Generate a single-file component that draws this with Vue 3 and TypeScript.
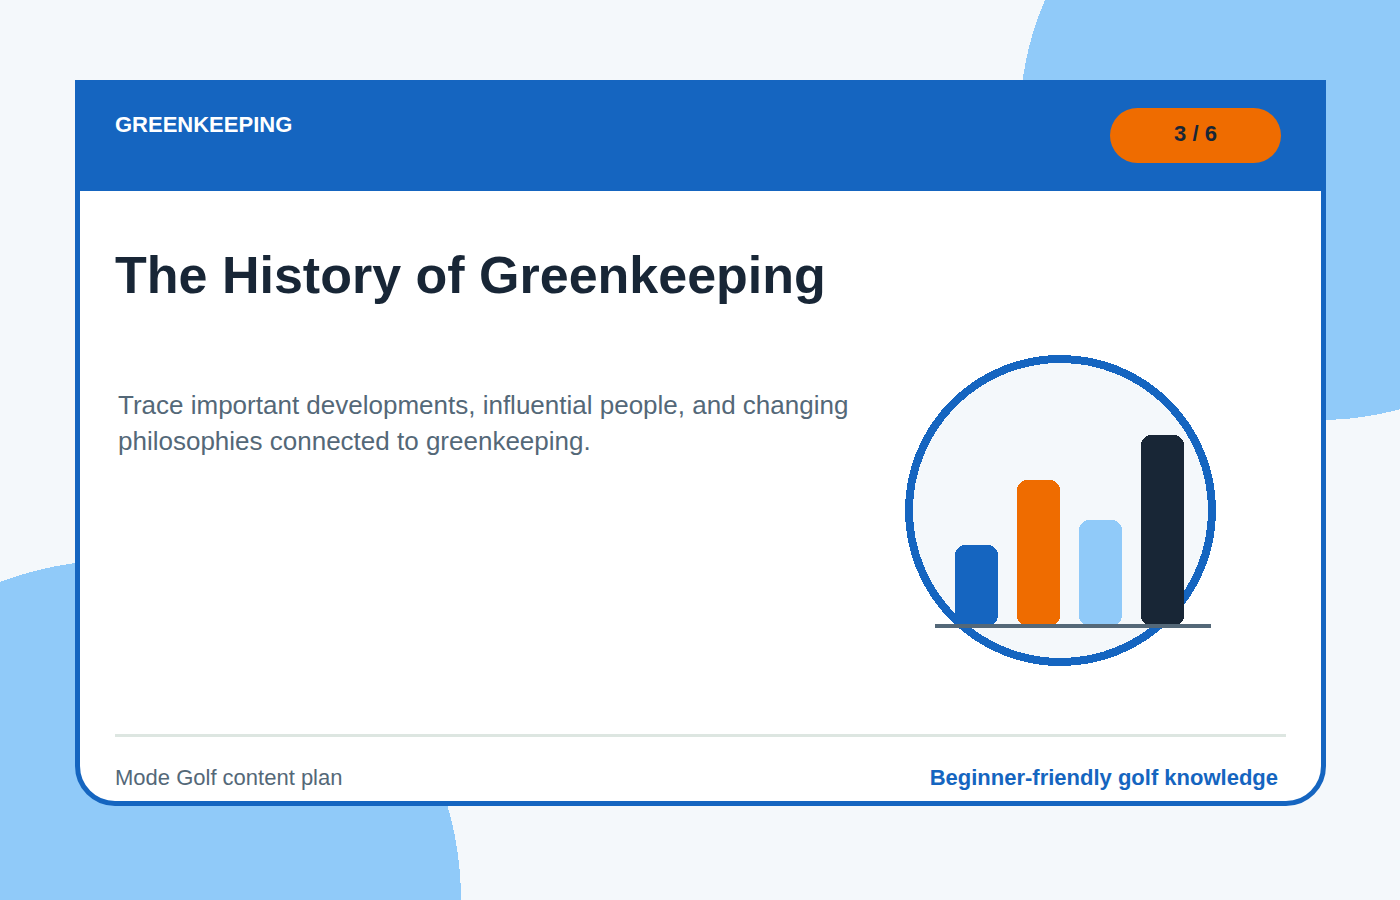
<script setup lang="ts">
interface Bar { x: number; top: number; color: string }
const bars: Bar[] = [
  { x: 55, top: 195, color: '#1565c0' },
  { x: 117, top: 130, color: '#ef6c00' },
  { x: 179, top: 170, color: '#90caf9' },
  { x: 241, top: 85, color: '#182636' },
]
</script>

<template>
  <div class="page">
    <svg class="blobs" width="1400" height="900" viewBox="0 0 1400 900" aria-hidden="true">
      <circle cx="1320" cy="120" r="300" fill="#90caf9" />
      <circle cx="120.5" cy="900.5" r="340.5" fill="#90caf9" />
    </svg>
    <section class="card">
      <header class="head">
        <span class="label">GREENKEEPING</span>
        <span class="pill">3 / 6</span>
      </header>
      <main class="body">
        <h1 class="title">The History of Greenkeeping</h1>
        <div class="row">
          <p class="text">Trace important developments, influential people, and changing philosophies connected to greenkeeping.</p>
          <svg class="chart" width="320" height="320" viewBox="0 0 320 320" aria-hidden="true">
            <circle cx="160.5" cy="160.5" r="151.5" fill="#f4f8fb" stroke="#1565c0" stroke-width="8" />
            <rect
              v-for="bar in bars"
              :key="bar.x"
              :x="bar.x"
              :y="bar.top"
              width="43"
              :height="276 - bar.top"
              rx="10"
              :fill="bar.color"
            />
            <rect x="35" y="274" width="276" height="4" fill="#546878" />
          </svg>
        </div>
      </main>
      <footer class="foot">
        <span class="foot-left">Mode Golf content plan</span>
        <span class="foot-right">Beginner-friendly golf knowledge</span>
      </footer>
    </section>
  </div>
</template>

<style>
html, body { margin: 0; padding: 0; }
</style>

<style scoped>
.page {
  position: relative;
  width: 1400px;
  height: 900px;
  overflow: hidden;
  background: #f4f8fb;
  box-sizing: border-box;
  padding: 80px 0 0 75px;
  font-family: "Liberation Sans", Arial, sans-serif;
}
.blobs {
  position: absolute;
  left: 0;
  top: 0;
  shape-rendering: crispEdges;
}
.card {
  position: relative;
  width: 1251px;
  height: 726px;
  box-sizing: border-box;
  border: 5px solid #1565c0;
  border-radius: 0 0 40px 40px;
  background: #fff;
  display: flex;
  flex-direction: column;
}
.head {
  height: 106px;
  box-sizing: border-box;
  background: #1565c0;
  padding: 23px 40px 0 35px;
  display: flex;
  justify-content: space-between;
  align-items: flex-start;
}
.label {
  margin-top: 4px;
  font-size: 22px;
  line-height: 26px;
  font-weight: 700;
  color: #fff;
}
.pill {
  width: 171px;
  height: 55px;
  border-radius: 28px;
  background: #ef6c00;
  color: #182636;
  font-size: 22px;
  font-weight: 700;
  line-height: 51px;
  text-align: center;
}
.body {
  flex: 1;
  min-height: 0;
  padding: 54px 35px 0;
}
.title {
  margin: 0;
  font-size: 52px;
  line-height: 60px;
  font-weight: 700;
  color: #182636;
}
.row {
  margin-top: 45px;
  display: flex;
  align-items: flex-start;
  justify-content: space-between;
}
.text {
  margin: 37px 0 0 3px;
  width: 750px;
  font-size: 26px;
  line-height: 36px;
  color: #546878;
}
.chart {
  display: block;
  flex: none;
  margin-right: 66px;
  shape-rendering: crispEdges;
}
.foot {
  margin: 0 35px;
  height: 67px;
  box-sizing: border-box;
  border-top: 3px solid #dde6e1;
  padding: 28px 8px 0 0;
  display: flex;
  justify-content: space-between;
  align-items: flex-start;
  font-size: 22px;
  line-height: 26px;
}
.foot-left { color: #546878; }
.foot-right { color: #1565c0; font-weight: 700; }
</style>
